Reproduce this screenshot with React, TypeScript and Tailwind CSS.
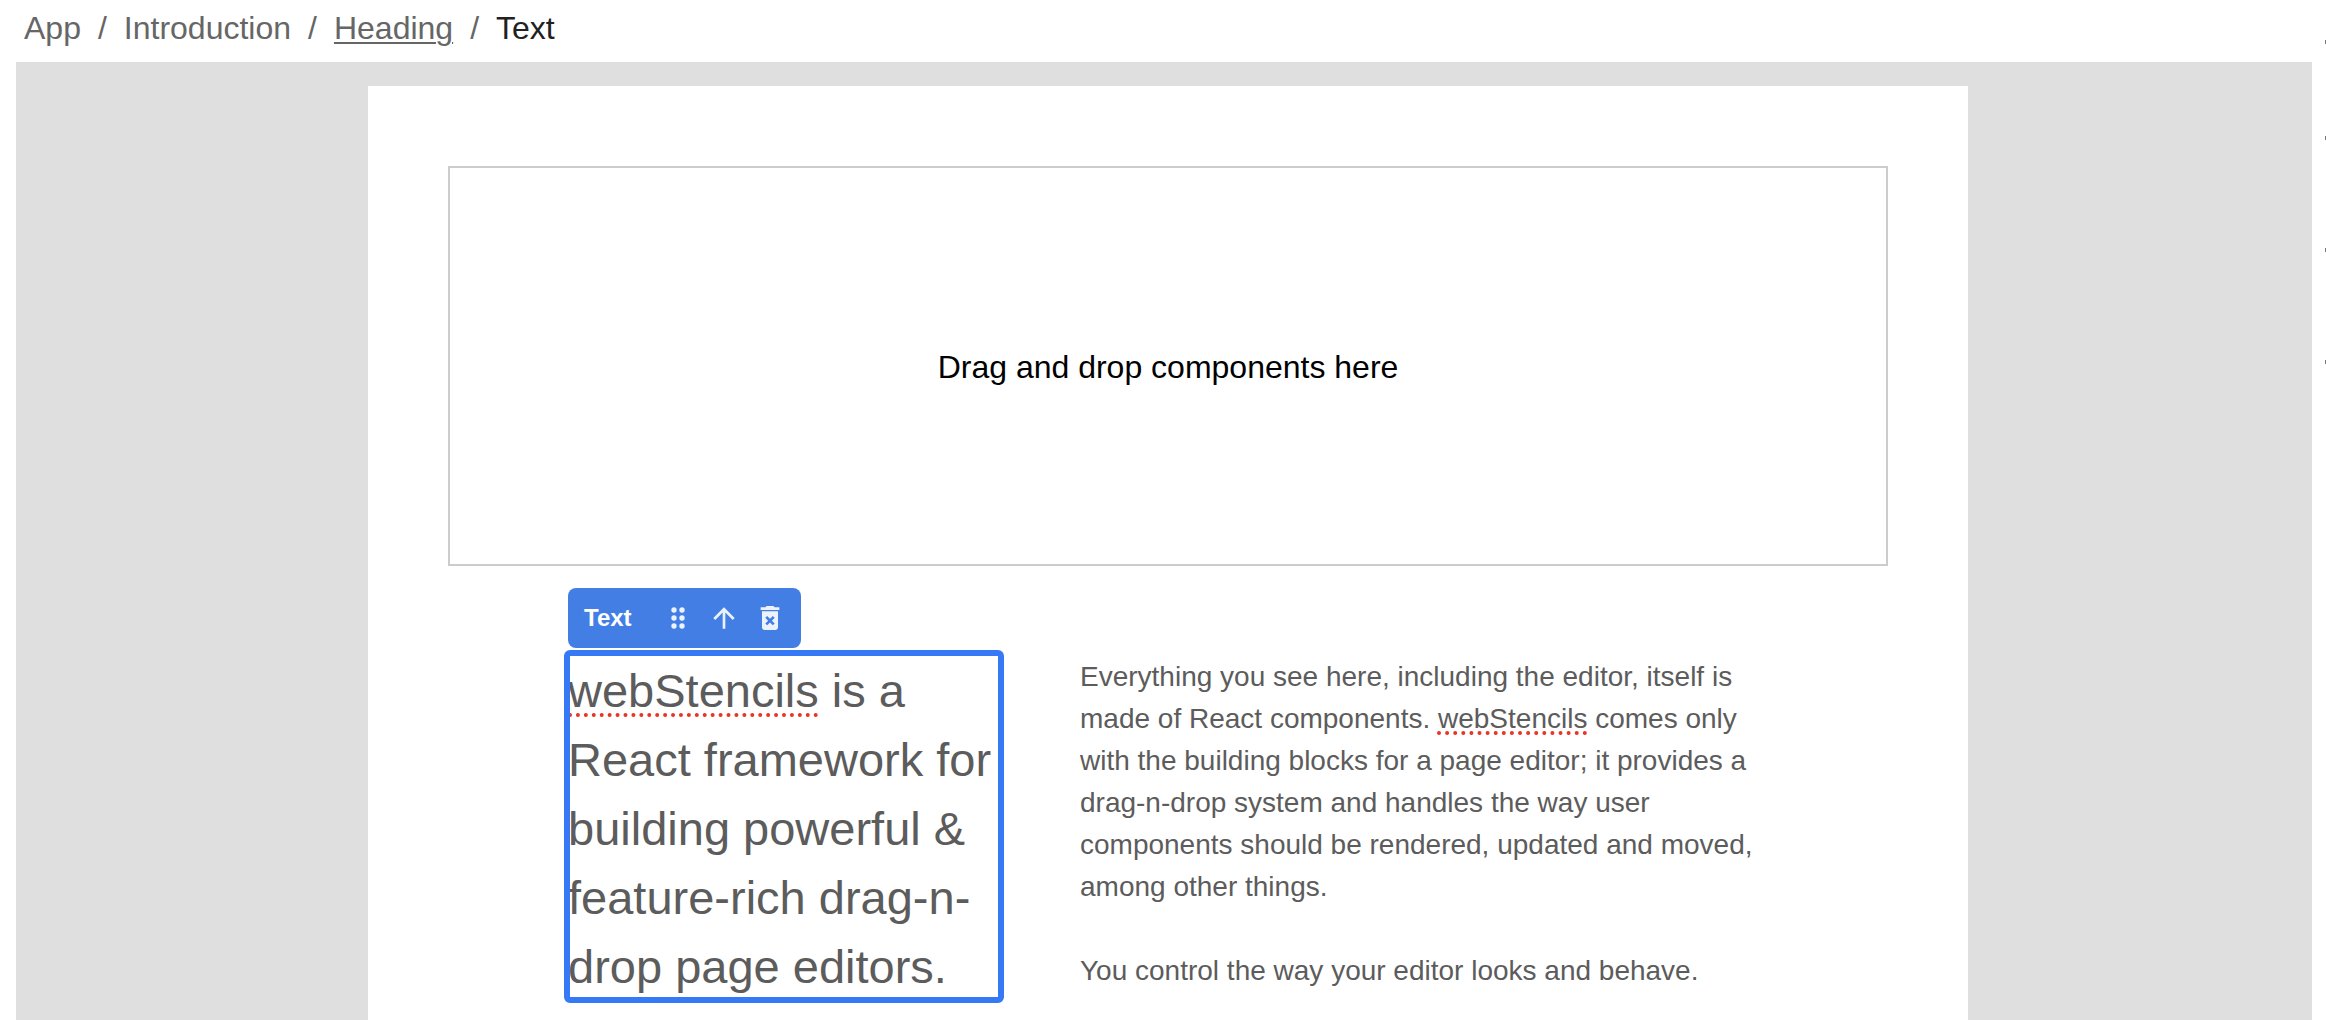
function Misspelled({ children, className }: { children: string; className: string }) {
  return (
    <span
      className={`underline decoration-dotted decoration-[#ea3323] decoration-4 [text-decoration-skip-ink:none] ${className}`}
    >
      {children}
    </span>
  );
}

function DragIcon() {
  return (
    <svg viewBox="0 0 24 24" className="size-8" fill="currentColor" aria-hidden="true">
      {[6, 12, 18].map((y) => (
        <g key={y}>
          <circle cx="9" cy={y} r="2" />
          <circle cx="15" cy={y} r="2" />
        </g>
      ))}
    </svg>
  );
}

function UpIcon() {
  return (
    <svg viewBox="0 0 24 24" className="size-8" fill="currentColor" aria-hidden="true">
      <path d="M4 12l1.41 1.41L11 7.83V20h2V7.83l5.58 5.59L20 12l-8-8-8 8z" />
    </svg>
  );
}

function DeleteIcon() {
  return (
    <svg viewBox="0 0 24 24" className="size-8" fill="currentColor" aria-hidden="true">
      <path
        fillRule="evenodd"
        d="M6 19c0 1.100.9 2 2 2h8c1.100 0 2-.9 2-2V7H6v12zm2.460-7.120l1.410-1.410L12 12.590l2.120-2.120 1.410 1.410L13.410 14l2.120 2.120-1.410 1.410L12 15.410l-2.120 2.120-1.410-1.410L10.590 14l-2.130-2.120zM15.500 4l-1-1h-5l-1 1H5v2h14V4z"
      />
    </svg>
  );
}

function Toolbar() {
  return (
    <div
      role="toolbar"
      aria-label="Text component"
      className="absolute bottom-full left-0 mb-1.5 flex h-15 items-center rounded-lg bg-[#437ee4] pr-[15px] pl-4 text-white"
    >
      <span className="mr-[30px] text-2xl font-bold">Text</span>
      <div className="flex gap-3.5 text-white/90">
        <button type="button" aria-label="Drag"><DragIcon /></button>
        <button type="button" aria-label="Select parent"><UpIcon /></button>
        <button type="button" aria-label="Delete"><DeleteIcon /></button>
      </div>
    </div>
  );
}

function Breadcrumbs() {
  return (
    <nav aria-label="Breadcrumb" className="px-6">
      <ol className="flex h-[62px] items-center gap-[17px] pb-1.5 text-[32px] leading-12 text-[#666]">
        <li><a href="#app">App</a></li>
        <li aria-hidden="true">/</li>
        <li><a href="#introduction">Introduction</a></li>
        <li aria-hidden="true">/</li>
        <li><a href="#heading" className="underline decoration-2 underline-offset-3">Heading</a></li>
        <li aria-hidden="true">/</li>
        <li aria-current="page" className="text-[#212121]">Text</li>
      </ol>
    </nav>
  );
}

export default function App() {
  return (
    <div className="flex h-screen overflow-hidden bg-white font-['Liberation_Sans',Arial,sans-serif]">
      <div className="flex min-w-0 flex-1 flex-col">
        <Breadcrumbs />
        <main className="ml-4 flex min-h-0 flex-1 justify-center overflow-hidden bg-[#dfdfdf] pt-6 pl-2">
          <article className="w-full max-w-[1600px] shrink-0 bg-white p-20">
            <div className="flex h-100 items-center justify-center border-2 border-[#ccc] pt-0.5 text-[32px] text-black">
              Drag and drop components here
            </div>
            <section className="mx-auto mt-[88px] flex max-w-[1200px] items-start gap-20 text-[#5c5c5c]">
              <div className="relative h-[345px] w-[432px] shrink-0 rounded-xs outline-6 -outline-offset-2 outline-[#3579f6]">
                <Toolbar />
                <h1 className="pt-0.5 text-[47px] leading-[69px] whitespace-nowrap">
                  <Misspelled className="underline-offset-6">webStencils</Misspelled> is a
                  <br />React framework for
                  <br />building powerful &amp;
                  <br />feature-rich drag-n-
                  <br />drop page editors.
                </h1>
              </div>
              <div className="space-y-[42px] pt-0.5 text-[28px] leading-[42px] whitespace-nowrap">
                <p>
                  Everything you see here, including the editor, itself is
                  <br />made of React components.{" "}
                  <Misspelled className="underline-offset-3">webStencils</Misspelled> comes only
                  <br />with the building blocks for a page editor; it provides a
                  <br />drag-n-drop system and handles the way user
                  <br />components should be rendered, updated and moved,
                  <br />among other things.
                </p>
                <p>You control the way your editor looks and behave.</p>
              </div>
            </section>
          </article>
        </main>
      </div>
      <aside className="flex w-3.5 shrink-0 flex-col items-end pt-10" aria-hidden="true">
        <span className="h-24 w-px"><i className="block h-1 w-px bg-[#777]" /></span>
        <span className="h-28 w-px"><i className="block h-1 w-px bg-[#777]" /></span>
        <span className="h-28 w-px"><i className="block h-1 w-px bg-[#777]" /></span>
        <span className="h-28 w-px"><i className="block h-1 w-px bg-[#777]" /></span>
      </aside>
    </div>
  );
}
